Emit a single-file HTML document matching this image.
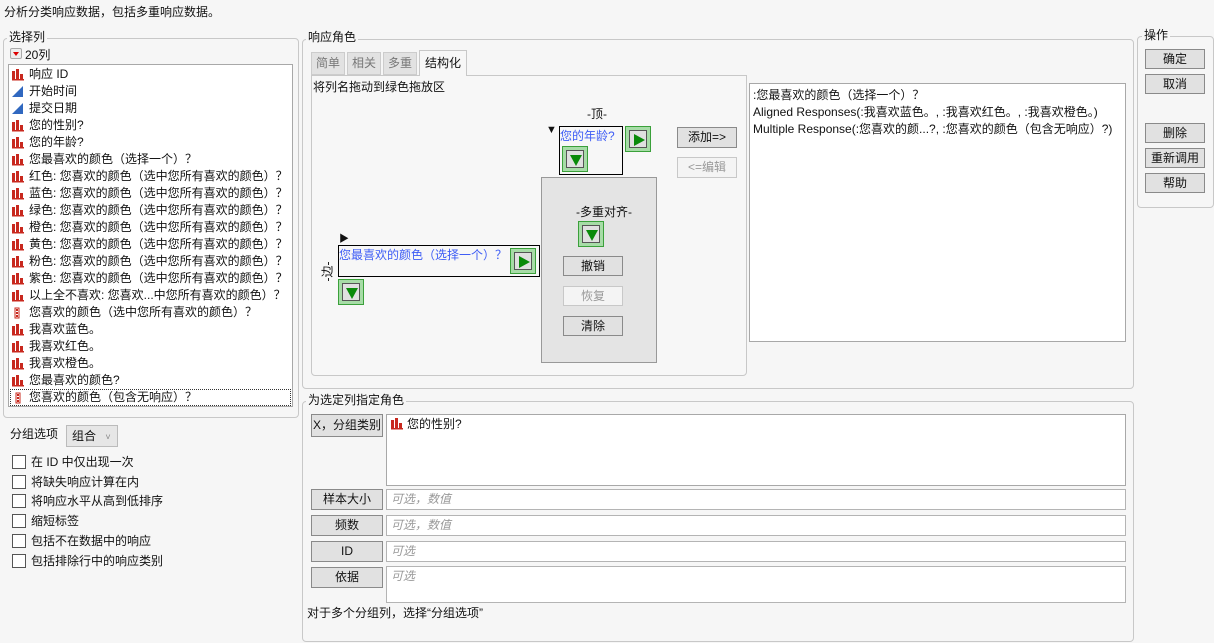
<!DOCTYPE html>
<html><head><meta charset="utf-8"><style>
*{box-sizing:border-box;margin:0;padding:0}
body{width:1214px;height:643px;background:#f6f6f6;font-family:"Liberation Sans","Noto Sans CJK SC",sans-serif;font-size:12px;color:#111;position:relative;overflow:hidden}
.a{position:absolute;white-space:nowrap}
.grp{position:absolute;border:1px solid #c8c8c8;border-radius:4px}
.lg{position:absolute;background:#f6f6f6;padding:0 2px;line-height:14px}
.btn{position:absolute;background:#e1e1e1;border:1px solid #8a8a8a;text-align:center;line-height:18px;font-size:12px}
.dis{background:#f4f4f4;border-color:#c8c8c8;color:#999}
.fld{position:absolute;background:#fff;border:1px solid #b4b4b4;color:#999;font-style:italic;padding-left:4px;line-height:18px}
.row{position:absolute;left:3px;height:17px;line-height:17px}
.row svg{position:absolute;left:0;top:3px}
.row span{position:absolute;left:17px}
.gb{position:absolute;width:26px;height:26px;background:#a7dca7;border:1px solid #3aa03a}
.gb i{position:absolute;left:3px;top:3px;width:18px;height:18px;background:#e0e0e0;border:1px solid #555}
.cb{position:absolute;left:12px;width:14px;height:14px;border:1px solid #555;background:#fff}
.ct{position:absolute;left:31px;line-height:14px}
.blue{color:#3d5cf5}
</style></head><body>
<svg width="0" height="0" style="position:absolute"><defs>
<g id="bar"><rect x="0" y="2" width="3" height="9" fill="#c8281e"/><rect x="4" y="0" width="3" height="11" fill="#c8281e"/><rect x="8" y="5" width="3" height="6" fill="#c8281e"/><rect x="0" y="10" width="12" height="1.5" fill="#c8281e"/></g>
<g id="tri"><polygon points="0,11 11,0 11,11" fill="#3068c0"/></g>
<g id="mr"><rect x="3" y="1" width="4" height="10" fill="#fff" stroke="#c8281e" stroke-width="1"/><rect x="4" y="2" width="2" height="2" fill="#c8281e"/><rect x="4" y="5" width="2" height="2" fill="#c8281e"/><rect x="4" y="8" width="2" height="2" fill="#c8281e"/></g>
</defs></svg>

<div class="a" style="left:4px;top:3px">分析分类响应数据，包括多重响应数据。</div>

<!-- 选择列 -->
<div class="grp" style="left:3px;top:38px;width:296px;height:380px"></div>
<div class="lg" style="left:7px;top:30px">选择列</div>
<div class="a" style="left:10px;top:48px;width:12px;height:11px;border:1px solid #aaa;border-radius:2px;background:#eee"></div>
<div class="a" style="left:13px;top:52px;width:0;height:0;border-left:3px solid transparent;border-right:3px solid transparent;border-top:4px solid #d00"></div>
<div class="a" style="left:25px;top:46px">20列</div>
<div class="a" style="left:8px;top:64px;width:285px;height:343px;background:#fff;border:1px solid #a8a8a8">
<div class="row" style="top:1px"><svg width="12" height="12"><use href="#bar"/></svg><span>响应 ID</span></div>
<div class="row" style="top:18px"><svg width="12" height="12"><use href="#tri"/></svg><span>开始时间</span></div>
<div class="row" style="top:35px"><svg width="12" height="12"><use href="#tri"/></svg><span>提交日期</span></div>
<div class="row" style="top:52px"><svg width="12" height="12"><use href="#bar"/></svg><span>您的性别?</span></div>
<div class="row" style="top:69px"><svg width="12" height="12"><use href="#bar"/></svg><span>您的年龄?</span></div>
<div class="row" style="top:86px"><svg width="12" height="12"><use href="#bar"/></svg><span>您最喜欢的颜色（选择一个）？</span></div>
<div class="row" style="top:103px"><svg width="12" height="12"><use href="#bar"/></svg><span>红色: 您喜欢的颜色（选中您所有喜欢的颜色）？</span></div>
<div class="row" style="top:120px"><svg width="12" height="12"><use href="#bar"/></svg><span>蓝色: 您喜欢的颜色（选中您所有喜欢的颜色）？</span></div>
<div class="row" style="top:137px"><svg width="12" height="12"><use href="#bar"/></svg><span>绿色: 您喜欢的颜色（选中您所有喜欢的颜色）？</span></div>
<div class="row" style="top:154px"><svg width="12" height="12"><use href="#bar"/></svg><span>橙色: 您喜欢的颜色（选中您所有喜欢的颜色）？</span></div>
<div class="row" style="top:171px"><svg width="12" height="12"><use href="#bar"/></svg><span>黄色: 您喜欢的颜色（选中您所有喜欢的颜色）？</span></div>
<div class="row" style="top:188px"><svg width="12" height="12"><use href="#bar"/></svg><span>粉色: 您喜欢的颜色（选中您所有喜欢的颜色）？</span></div>
<div class="row" style="top:205px"><svg width="12" height="12"><use href="#bar"/></svg><span>紫色: 您喜欢的颜色（选中您所有喜欢的颜色）？</span></div>
<div class="row" style="top:222px"><svg width="12" height="12"><use href="#bar"/></svg><span>以上全不喜欢: 您喜欢...中您所有喜欢的颜色）？</span></div>
<div class="row" style="top:239px"><svg width="12" height="12"><use href="#mr"/></svg><span>您喜欢的颜色（选中您所有喜欢的颜色）？</span></div>
<div class="row" style="top:256px"><svg width="12" height="12"><use href="#bar"/></svg><span>我喜欢蓝色。</span></div>
<div class="row" style="top:273px"><svg width="12" height="12"><use href="#bar"/></svg><span>我喜欢红色。</span></div>
<div class="row" style="top:290px"><svg width="12" height="12"><use href="#bar"/></svg><span>我喜欢橙色。</span></div>
<div class="row" style="top:307px"><svg width="12" height="12"><use href="#bar"/></svg><span>您最喜欢的颜色?</span></div>
<div class="row" style="top:324px;left:1px;width:281px;border:1px dotted #333"><svg width="12" height="12" style="left:2px;top:2px"><use href="#mr"/></svg><span style="left:18px;top:-1px">您喜欢的颜色（包含无响应）？</span></div>
</div>

<div class="a" style="left:10px;top:425px">分组选项</div>
<div class="a" style="left:66px;top:425px;width:52px;height:22px;background:#e6e6e6;border:1px solid #bbb;line-height:20px;padding-left:5px">组合 <span style="color:#888;font-size:9px;margin-left:6px">˅</span></div>
<div class="cb" style="top:455px"></div><div class="ct" style="top:455px">在 ID 中仅出现一次</div>
<div class="cb" style="top:475px"></div><div class="ct" style="top:475px">将缺失响应计算在内</div>
<div class="cb" style="top:494px"></div><div class="ct" style="top:494px">将响应水平从高到低排序</div>
<div class="cb" style="top:514px"></div><div class="ct" style="top:514px">缩短标签</div>
<div class="cb" style="top:534px"></div><div class="ct" style="top:534px">包括不在数据中的响应</div>
<div class="cb" style="top:554px"></div><div class="ct" style="top:554px">包括排除行中的响应类别</div>

<!-- 响应角色 -->
<div class="grp" style="left:302px;top:39px;width:832px;height:350px"></div>
<div class="lg" style="left:306px;top:30px">响应角色</div>
<div class="a" style="left:311px;top:75px;width:436px;height:301px;border:1px solid #c8c8c8;border-radius:0 0 4px 4px;background:#f7f7f7"></div>
<div class="a" style="left:311px;top:52px;width:34px;height:23px;background:#e2e2e2;border:1px solid #ccc;color:#777;text-align:center;line-height:21px">简单</div>
<div class="a" style="left:347px;top:52px;width:34px;height:23px;background:#e2e2e2;border:1px solid #ccc;color:#777;text-align:center;line-height:21px">相关</div>
<div class="a" style="left:383px;top:52px;width:34px;height:23px;background:#e2e2e2;border:1px solid #ccc;color:#777;text-align:center;line-height:21px">多重</div>
<div class="a" style="left:419px;top:50px;width:48px;height:26px;background:#f7f7f7;border:1px solid #c8c8c8;border-bottom:none;text-align:center;line-height:24px">结构化</div>
<div class="a" style="left:313px;top:78px">将列名拖动到绿色拖放区</div>
<div class="a" style="left:587px;top:105px">-顶-</div>
<div class="a" style="left:546px;top:124px;font-size:11px">▼</div>
<div class="a" style="left:559px;top:126px;width:64px;height:49px;border:1px solid #000;background:#f7f7f7"></div>
<div class="a blue" style="left:560px;top:127px">您的年龄?</div>
<div class="gb" style="left:625px;top:126px"><i></i><svg class="a" style="left:6px;top:6px" width="14" height="14"><polygon points="2,1 13,7 2,13" fill="#0a8a0a"/></svg></div>
<div class="gb" style="left:562px;top:146px"><i></i><svg class="a" style="left:6px;top:6px" width="14" height="14"><polygon points="1,2 13,2 7,13" fill="#0a8a0a"/></svg></div>
<div class="btn" style="left:677px;top:127px;width:60px;height:21px">添加=&gt;</div>
<div class="btn dis" style="left:677px;top:157px;width:60px;height:21px">&lt;=编辑</div>

<div class="a" style="left:541px;top:177px;width:116px;height:186px;background:#e4e4e4;border:1px solid #999"></div>
<div class="a" style="left:576px;top:203px">-多重对齐-</div>
<div class="gb" style="left:578px;top:221px"><i></i><svg class="a" style="left:6px;top:6px" width="14" height="14"><polygon points="1,2 13,2 7,13" fill="#0a8a0a"/></svg></div>
<div class="btn" style="left:563px;top:256px;width:60px;height:20px">撤销</div>
<div class="btn dis" style="left:563px;top:286px;width:60px;height:20px">恢复</div>
<div class="btn" style="left:563px;top:316px;width:60px;height:20px">清除</div>

<div class="a" style="left:339px;top:230px;font-size:10px">▶</div>
<div class="a" style="left:338px;top:245px;width:202px;height:32px;border:1px solid #000"></div>
<div class="a blue" style="left:339px;top:246px">您最喜欢的颜色（选择一个）？</div>
<div class="gb" style="left:510px;top:248px"><i></i><svg class="a" style="left:6px;top:6px" width="14" height="14"><polygon points="2,1 13,7 2,13" fill="#0a8a0a"/></svg></div>
<div class="gb" style="left:338px;top:279px"><i></i><svg class="a" style="left:6px;top:6px" width="14" height="14"><polygon points="1,2 13,2 7,13" fill="#0a8a0a"/></svg></div>
<div class="a" style="left:317px;top:263px;transform:rotate(-90deg);transform-origin:center">-边-</div>

<div class="a" style="left:749px;top:83px;width:377px;height:259px;background:#fff;border:1px solid #a8a8a8;padding:3px 3px;line-height:17px">:您最喜欢的颜色（选择一个）？<br>Aligned Responses(:我喜欢蓝色。, :我喜欢红色。, :我喜欢橙色。)<br>Multiple Response(:您喜欢的颜...?, :您喜欢的颜色（包含无响应）?)</div>

<!-- 操作 -->
<div class="grp" style="left:1137px;top:36px;width:77px;height:172px"></div>
<div class="lg" style="left:1142px;top:28px">操作</div>
<div class="btn" style="left:1145px;top:49px;width:60px;height:20px">确定</div>
<div class="btn" style="left:1145px;top:74px;width:60px;height:20px">取消</div>
<div class="btn" style="left:1145px;top:123px;width:60px;height:20px">删除</div>
<div class="btn" style="left:1145px;top:148px;width:60px;height:20px">重新调用</div>
<div class="btn" style="left:1145px;top:173px;width:60px;height:20px">帮助</div>

<!-- 为选定列指定角色 -->
<div class="grp" style="left:302px;top:401px;width:832px;height:241px"></div>
<div class="lg" style="left:306px;top:393px">为选定列指定角色</div>
<div class="btn" style="left:311px;top:414px;width:72px;height:23px;line-height:21px">X，分组类别</div>
<div class="a" style="left:386px;top:414px;width:740px;height:72px;background:#fff;border:1px solid #a8a8a8"></div>
<svg class="a" style="left:391px;top:418px" width="12" height="12"><use href="#bar"/></svg>
<div class="a" style="left:407px;top:415px">您的性别?</div>
<div class="btn" style="left:311px;top:489px;width:72px;height:21px">样本大小</div>
<div class="fld" style="left:386px;top:489px;width:740px;height:21px">可选，数值</div>
<div class="btn" style="left:311px;top:515px;width:72px;height:21px">频数</div>
<div class="fld" style="left:386px;top:515px;width:740px;height:21px">可选，数值</div>
<div class="btn" style="left:311px;top:541px;width:72px;height:21px">ID</div>
<div class="fld" style="left:386px;top:541px;width:740px;height:21px">可选</div>
<div class="btn" style="left:311px;top:567px;width:72px;height:21px">依据</div>
<div class="fld" style="left:386px;top:566px;width:740px;height:37px">可选</div>
<div class="a" style="left:307px;top:604px">对于多个分组列，选择“分组选项”</div>
</body></html>
